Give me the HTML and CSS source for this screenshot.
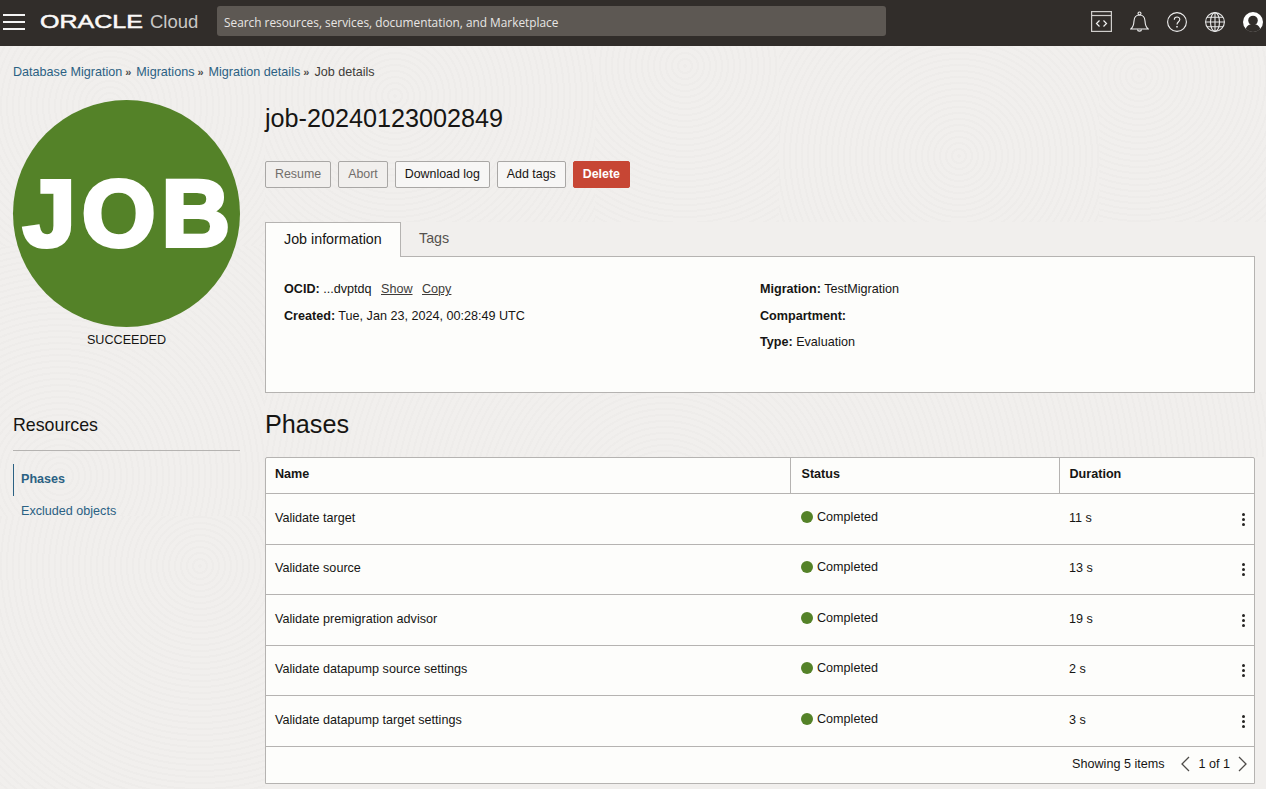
FILE: index.html
```html
<!DOCTYPE html>
<html lang="en">
<head>
<meta charset="utf-8">
<title>Job details</title>
<link rel="stylesheet" href="styles.css">
</head>
<body>
<header class="topbar">
  <button class="menu" aria-label="Menu"><span></span><span></span><span></span></button>
  <div class="brand">
    <svg class="logo" width="103" height="18" viewBox="0 0 103 18"><text x="0" y="15" textLength="103" lengthAdjust="spacingAndGlyphs" class="logo-text">ORACLE</text></svg>
    <span class="cloud">Cloud</span>
  </div>
  <div class="search">Search resources, services, documentation, and Marketplace</div>
  <div class="icons">
    <svg width="21" height="21" viewBox="0 0 21 21" fill="none" stroke="#cfcdcb" stroke-width="1.2"><rect x=".6" y=".6" width="19.800" height="19.800"/><path d="M.6 4.500h19.800"/><path d="M8.500 9.500l-3 3 3 3M12.500 9.500l3 3-3 3" stroke="#f2f2f2"/></svg>
    <svg width="19" height="21" viewBox="0 0 19 21" fill="none" stroke="#f0f0f0" stroke-width="1.100"><path d="M.8 18h17.400c-2.500-2-3-4.500-3.200-8-.2-3.500-2-6-5.500-6s-5.300 2.500-5.500 6c-.2 3.500-.7 6-3.200 8z"/><circle cx="9.500" cy="2.500" r="1.500"/><path d="M7.500 18.500c0 2.200 4 2.200 4 0"/></svg>
    <svg width="20" height="20" viewBox="0 0 20 20" fill="none" stroke="#f0f0f0" stroke-width="1.100"><circle cx="10" cy="10" r="9.400"/><path d="M7.300 7.700c0-3.500 5.500-3.500 5.500-.2 0 2.300-2.800 2.200-2.800 5"/><path d="M10 14v1.600" stroke-width="1.500"/></svg>
    <svg width="20" height="20" viewBox="0 0 20 20" fill="none" stroke="#e8e8e8" stroke-width="1.100"><circle cx="10" cy="10" r="9.400"/><ellipse cx="10" cy="10" rx="4.500" ry="9.400"/><path d="M10 .6v18.800M.6 10h18.800M2 5.200h16M2 14.800h16"/></svg>
    <svg width="20" height="20" viewBox="0 0 20 20"><circle cx="10" cy="10" r="10" fill="#fff"/><circle cx="10" cy="8.500" r="4.800" fill="#312d2a"/><path d="M2.800 17c1-3.500 3.500-4.800 7.200-4.800s6.200 1.300 7.200 4.800c-2 1.900-4.500 3-7.200 3s-5.200-1.100-7.200-3z" fill="#312d2a"/></svg>
  </div>
</header>

<nav class="crumbs">
  <a>Database Migration</a><span class="sep">»</span><a>Migrations</a><span class="sep">»</span><a>Migration details</a><span class="sep">»</span><span class="here">Job details</span>
</nav>

<div class="page">
  <aside class="side">
    <div class="badge">JOB</div>
    <div class="state">SUCCEEDED</div>
    <h2 class="res-title">Resources</h2>
    <ul class="res-list">
      <li class="res-item active">Phases</li>
      <li class="res-item">Excluded objects</li>
    </ul>
  </aside>

  <main class="main">
    <h1 class="title">job-20240123002849</h1>
    <div class="actions">
      <button class="btn disabled">Resume</button>
      <button class="btn disabled">Abort</button>
      <button class="btn">Download log</button>
      <button class="btn">Add tags</button>
      <button class="btn danger">Delete</button>
    </div>

    <div class="tabs">
      <div class="tab current">Job information</div>
      <div class="tab">Tags</div>
    </div>
    <section class="info">
      <div class="info-col">
        <p><b>OCID:</b> ...dvptdq <a class="link">Show</a> <a class="link">Copy</a></p>
        <p><b>Created:</b> Tue, Jan 23, 2024, 00:28:49 UTC</p>
      </div>
      <div class="info-col">
        <p><b>Migration:</b> TestMigration</p>
        <p><b>Compartment:</b></p>
        <p><b>Type:</b> Evaluation</p>
      </div>
    </section>

    <h2 class="phases">Phases</h2>
    <section class="panel">
      <table class="grid">
        <thead>
          <tr><th class="c-name">Name</th><th class="c-status">Status</th><th class="c-dur">Duration</th></tr>
        </thead>
        <tbody>
          <tr><td>Validate target</td><td class="st"><span class="dot"></span>Completed</td><td><div class="dur"><span>11 s</span><span class="kebab"><i></i><i></i><i></i></span></div></td></tr>
          <tr><td>Validate source</td><td class="st"><span class="dot"></span>Completed</td><td><div class="dur"><span>13 s</span><span class="kebab"><i></i><i></i><i></i></span></div></td></tr>
          <tr><td>Validate premigration advisor</td><td class="st"><span class="dot"></span>Completed</td><td><div class="dur"><span>19 s</span><span class="kebab"><i></i><i></i><i></i></span></div></td></tr>
          <tr><td>Validate datapump source settings</td><td class="st"><span class="dot"></span>Completed</td><td><div class="dur"><span>2 s</span><span class="kebab"><i></i><i></i><i></i></span></div></td></tr>
          <tr><td>Validate datapump target settings</td><td class="st"><span class="dot"></span>Completed</td><td><div class="dur"><span>3 s</span><span class="kebab"><i></i><i></i><i></i></span></div></td></tr>
        </tbody>
      </table>
      <div class="pager">
        <span class="count">Showing 5 items</span>
        <svg width="10" height="16" viewBox="0 0 10 16" fill="none" stroke="#4f4c49" stroke-width="1.300"><path d="M9 1L2 8l7 7"/></svg>
        <span class="pages">1 of 1</span>
        <svg width="10" height="16" viewBox="0 0 10 16" fill="none" stroke="#4f4c49" stroke-width="1.300"><path d="M1 1l7 7-7 7"/></svg>
      </div>
    </section>
  </main>
</div>
</body>
</html>
```

FILE: styles.css
```css
* { box-sizing: border-box; }
html, body { height: 100%; }
body {
  margin: 0;
  overflow: hidden;
  font-family: "Liberation Sans", Arial, sans-serif;
  font-size: 12.600px;
  color: #161513;
  background-color: #f1efed;
  background-image:
    repeating-radial-gradient(circle at 110px 60px, rgba(0,0,0,.012) 0 2px, transparent 2px 6px),
    repeating-radial-gradient(circle at 130px 50px, rgba(0,0,0,.012) 0 2px, transparent 2px 6px),
    repeating-radial-gradient(circle at 90px 20px, rgba(0,0,0,.012) 0 2px, transparent 2px 6px),
    repeating-radial-gradient(circle at 180px 110px, rgba(0,0,0,.012) 0 2px, transparent 2px 6px),
    repeating-radial-gradient(circle at 40px 30px, rgba(0,0,0,.012) 0 2px, transparent 2px 6px),
    repeating-radial-gradient(circle at 60px 230px, rgba(0,0,0,.012) 0 2px, transparent 2px 6px),
    repeating-radial-gradient(circle at 200px 50px, rgba(0,0,0,.012) 0 2px, transparent 2px 6px),
    repeating-radial-gradient(circle at 400px 120px, rgba(0,0,0,.012) 0 2px, transparent 2px 6px);
  background-size: 265px 200px, 330px 176px, 184px 176px, 320px 176px, 167px 176px, 265px 270px, 265px 273px, 1001px 65px;
  background-position: 0 46px, 265px 46px, 595px 46px, 779px 46px, 1099px 46px, 0 246px, 0 516px, 265px 392px;
  background-repeat: no-repeat;
}

.topbar {
  height: 46px;
  background: #312d2a;
  display: flex;
  align-items: center;
  color: #fff;
}
.menu {
  width: 40px;
  height: 46px;
  padding: 0 0 3px 3px;
  border: 0;
  background: none;
  display: flex;
  flex-direction: column;
  justify-content: center;
  gap: 5px;
}
.menu span { display: block; width: 22px; height: 2px; background: #f4f4f4; }
.brand { width: 177px; display: flex; align-items: center; gap: 7px; padding-bottom: 3px; }
.logo { display: block; overflow: visible; flex: none; }
.logo-text { font: 18.500px "Liberation Sans", Arial, sans-serif; fill: #fbf9f8; stroke: #fbf9f8; stroke-width: .5px; }
.cloud { font-size: 18.500px; font-weight: 400; color: #c9c7c5; line-height: 22px; }
.search {
  width: 669px;
  height: 30px;
  margin-bottom: 4px;
  background: #5d5853;
  border-radius: 3px;
  font-family: "Open Sans", sans-serif;
  font-size: 11.850px;
  line-height: 32px;
  padding-left: 7px;
  color: #e8e6e4;
}
.icons {
  margin-left: auto;
  padding: 0 3px 3px 0;
  display: flex;
  align-items: center;
  gap: 18px;
}
.icons svg { display: block; }

.crumbs {
  height: 54px;
  padding: 19px 0 0 13px;
  line-height: 15px;
  white-space: nowrap;
}
.crumbs a { color: #2b6183; }
.sep { margin: 0 5px 0 3px; font-size: 11px; font-weight: 700; color: #4f4c49; }
.here { color: #403c39; }

.page { display: flex; padding: 0 11px 0 13px; gap: 25px; }
.side { width: 227px; flex: none; }
.main { flex: 1; min-width: 0; }

.badge {
  width: 227px;
  height: 227px;
  padding-left: 6px;
  border-radius: 50%;
  background: #548228;
  color: #fff;
  font-weight: 700;
  font-size: 95px;
  line-height: 227px;
  text-align: center;
  letter-spacing: 6px;
  -webkit-text-stroke: 4px #fff;
}
.state { margin-top: 6px; text-align: center; line-height: 15px; }
.res-title {
  margin: 67px 0 0;
  height: 36px;
  font-size: 17.800px;
  line-height: 20px;
  font-weight: 400;
  border-bottom: 1px solid #b5b3b1;
}
.res-list { list-style: none; margin: 13px 0 0; padding: 0; }
.res-item { height: 32px; line-height: 31px; padding-left: 8px; color: #2b6183; }
.active { font-weight: 700; border-left: 1px solid #2b6183; padding-left: 7px; }

.title { margin: 4px 0 0; font-size: 25.200px; font-weight: 400; line-height: 28px; }
.actions { display: flex; gap: 7px; margin-top: 29px; }
.btn {
  height: 27px;
  padding: 0 9px 2px;
  font: 12.400px "Liberation Sans", Arial, sans-serif;
  background: #f7f6f5;
  color: #161513;
  border: 1px solid #a9a7a5;
  border-radius: 2px;
}
.btn.disabled { color: #716e6b; background: #f1efed; }
.btn.danger { background: #c74634; border-color: #c74634; color: #fff; font-weight: 700; }

.tabs { display: flex; margin-top: 34px; height: 35px; position: relative; z-index: 1; }
.tab { padding: 0 18px; height: 35px; line-height: 33px; font-size: 14.300px; color: #56524f; }
.tab.current {
  background: #fdfdfb;
  color: #161513;
  border: 1px solid #b5b3b1;
  border-bottom: 0;
  width: 136px;
}
.info {
  display: flex;
  height: 137px;
  margin-top: -1px;
  padding: 25px 18px 0;
  background: #fdfdfb;
  border: 1px solid #b5b3b1;
}
.info-col { flex: none; width: 476px; }
.info p { margin: 0 0 11.600px; line-height: 15px; white-space: nowrap; }
.link { color: #403c39; text-decoration: underline; margin-left: 6px; }

.phases { margin: 15px 0 0; font-size: 25.200px; line-height: 32px; font-weight: 400; }
.panel {
  margin-top: 17px;
  background: #fdfdfb;
  border: 1px solid #b5b3b1;
  border-radius: 2px 2px 0 0;
}
.grid { width: 100%; border-collapse: collapse; table-layout: fixed; }
.grid th {
  height: 35px;
  padding: 0 9px 2px;
  text-align: left;
  border-bottom: 1px solid #b5b3b1;
}
.c-name { width: 524px; }
.c-status { width: 269px; border-left: 1px solid #b5b3b1; }
.c-dur { border-left: 1px solid #b5b3b1; }
.grid th.c-status { padding-left: 11px; }
.grid th.c-dur { padding-left: 10px; }
.grid td {
  height: 50px;
  padding: 0 9px 2px;
  border-bottom: 1px solid #b5b3b1;
}
.grid tr:nth-child(odd) td { height: 51px; }
.grid td.st { padding: 0 0 4px 11px; }
.grid td:nth-child(3) { padding: 0 9px 2px 10px; }
.dot {
  display: inline-block;
  width: 12px;
  height: 12px;
  margin-right: 4px;
  border-radius: 50%;
  background: #548228;
  vertical-align: -2px;
}
.dur { display: flex; justify-content: space-between; align-items: center; }
.kebab { display: flex; flex-direction: column; gap: 2px; margin-top: 3px; }
.kebab i { display: block; width: 3px; height: 3px; border-radius: 50%; background: #262422; }
.pager {
  height: 36px;
  padding-bottom: 2px;
  display: flex;
  align-items: center;
  justify-content: flex-end;
  padding-right: 6px;
  gap: 8px;
}
.count { margin-right: 8px; }
```
